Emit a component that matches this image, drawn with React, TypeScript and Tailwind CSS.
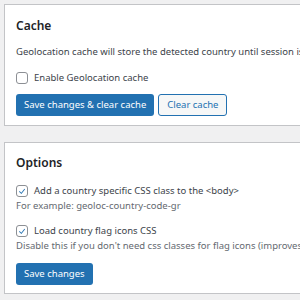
function Box({ checked }: { checked?: boolean }) {
  return (
    <span className="flex h-[12px] w-[12px] shrink-0 items-center justify-center rounded-[3px] border border-[#8c8f94] bg-white">
      {checked && (
        <svg viewBox="0 0 20 20" className="h-[12px] w-[12px]">
          <path d="M14.8 5.4 8.6 13.3 5.2 10.2 4 11.5l4.8 4.3 7.4-9.3z" fill="#2271b1" />
        </svg>
      )}
    </span>
  );
}

export default function App() {
  return (
    <div
      className="h-[300px] w-[300px] overflow-hidden bg-[#f0f0f1] pl-[4px] pt-[4px] text-[9.5px] text-[#3c434a]"
      style={{ fontFamily: '"Noto Sans", "Open Sans", sans-serif' }}
    >
      <div className="w-[340px] border border-[#c3c4c7] bg-white px-[11px] pb-[9px] pt-[13px]">
        <h2 className="text-[12px] font-semibold leading-[16px] text-[#1d2327]">Cache</h2>
        <p className="mt-[10px] whitespace-nowrap leading-[16px]">
          Geolocation cache will store the detected country until session is expired.
        </p>
        <label className="mt-[10px] flex h-[16px] items-center gap-[6px]">
          <Box />
          Enable Geolocation cache
        </label>
        <div className="mt-[8px] flex gap-[4px]">
          <button className="h-[22px] rounded-[3px] bg-[#2271b1] px-[8px] text-white">
            Save changes &amp; clear cache
          </button>
          <button className="h-[22px] rounded-[3px] border border-[#2271b1] bg-[#f6f7f7] px-[8px] text-[#2271b1]">
            Clear cache
          </button>
        </div>
      </div>

      <div className="mt-[16px] w-[340px] border border-[#c3c4c7] bg-white px-[11px] pb-[8px] pt-[12px]">
        <h2 className="text-[12px] font-semibold leading-[16px] text-[#1d2327]">Options</h2>
        <label className="mt-[12px] flex h-[16px] items-center gap-[6px]">
          <Box checked />
          Add a country specific CSS class to the &lt;body&gt;
        </label>
        <p className="whitespace-nowrap leading-[14px] text-[#646970]">For example: geoloc-country-code-gr</p>
        <label className="mt-[10px] flex h-[16px] items-center gap-[6px]">
          <Box checked />
          Load country flag icons CSS
        </label>
        <p className="whitespace-nowrap leading-[14px] text-[#646970]">
          Disable this if you don't need css classes for flag icons (improves performance)
        </p>
        <button className="mt-[10px] h-[22px] rounded-[3px] bg-[#2271b1] px-[8px] text-white">
          Save changes
        </button>
      </div>
    </div>
  );
}
